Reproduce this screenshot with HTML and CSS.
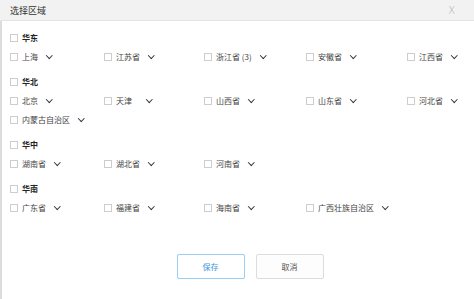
FILE: index.html
```html
<!DOCTYPE html>
<html lang="zh-CN">
<head>
    <meta charset="UTF-8">
    <meta name="viewport" content="width=device-width, initial-scale=1.0">
    <title>选择区域</title>
    <link rel="stylesheet" href="styles.css">
</head>
<body>
    <div class="dialog">
        <div class="dialog-head">
            <span class="dialog-title">选择区域</span>
            <span class="dialog-close">X</span>
        </div>
        <div class="dialog-body">
            <div class="region">
                <div class="region-title"><span class="check"></span>华东</div>
                <div class="region-list">
                    <div class="item"><span class="check"></span>上海<i class="arrow"></i></div>
                    <div class="item"><span class="check"></span>江苏省<i class="arrow"></i></div>
                    <div class="item"><span class="check"></span>浙江省 (3)<i class="arrow"></i></div>
                    <div class="item"><span class="check"></span>安徽省<i class="arrow"></i></div>
                    <div class="item"><span class="check"></span>江西省<i class="arrow"></i></div>
                </div>
            </div>
            <div class="region">
                <div class="region-title"><span class="check"></span>华北</div>
                <div class="region-list">
                    <div class="item"><span class="check"></span>北京<i class="arrow"></i></div>
                    <div class="item"><span class="check"></span>天津<i class="arrow wide"></i></div>
                    <div class="item"><span class="check"></span>山西省<i class="arrow"></i></div>
                    <div class="item"><span class="check"></span>山东省<i class="arrow"></i></div>
                    <div class="item"><span class="check"></span>河北省<i class="arrow"></i></div>
                    <div class="item"><span class="check"></span>内蒙古自治区<i class="arrow"></i></div>
                </div>
            </div>
            <div class="region">
                <div class="region-title"><span class="check"></span>华中</div>
                <div class="region-list">
                    <div class="item"><span class="check"></span>湖南省<i class="arrow"></i></div>
                    <div class="item"><span class="check"></span>湖北省<i class="arrow"></i></div>
                    <div class="item"><span class="check"></span>河南省<i class="arrow"></i></div>
                </div>
            </div>
            <div class="region">
                <div class="region-title"><span class="check"></span>华南</div>
                <div class="region-list">
                    <div class="item"><span class="check"></span>广东省<i class="arrow"></i></div>
                    <div class="item"><span class="check"></span>福建省<i class="arrow"></i></div>
                    <div class="item"><span class="check"></span>海南省<i class="arrow"></i></div>
                    <div class="item"><span class="check"></span>广西壮族自治区<i class="arrow"></i></div>
                </div>
            </div>
            <div class="actions">
                <button class="btn btn-save">保存</button>
                <button class="btn btn-cancel">取消</button>
            </div>
        </div>
    </div>
</body>
</html>
```

FILE: styles.css
```css
body {
    margin: 0;
    font-family: "Noto Sans CJK SC", "Noto Sans", sans-serif;
    background-color: #fff;
    color: #333;
}
.dialog {
    height: 299px;
    display: flex;
    flex-direction: column;
}
.dialog-head {
    height: 20px;
    background: #f2f2f2;
    border-bottom: 1px solid #e4e4e4;
    display: flex;
    justify-content: space-between;
    align-items: center;
    padding: 0 19px 0 10px;
    font-size: 9px;
    color: #333;
}
.dialog-close {
    font-family: "DejaVu Sans", sans-serif;
    font-size: 10px;
    font-weight: 300;
    color: #b0b0b0;
}
.dialog-body {
    flex: 1;
    border-left: 2px solid #dcdcdc;
    padding: 7px 0 0 8px;
}
.region {
    margin-bottom: 6px;
}
.region-title, .item {
    height: 19px;
    display: flex;
    align-items: center;
    font-size: 8px;
    white-space: nowrap;
}
.region-title {
    font-weight: bold;
    color: #222;
}
.region-list {
    display: grid;
    grid-template-columns: 94px 100px 102px 101px auto;
}
.item {
    color: #444;
}
.check {
    width: 6px;
    height: 6px;
    border: 1px solid #cdcdcd;
    background: #fff;
    margin-right: 4px;
    flex: none;
}
.arrow {
    width: 3.5px;
    height: 3.5px;
    border-right: 1.5px solid #333;
    border-bottom: 1.5px solid #333;
    transform: rotate(45deg);
    margin: -3px 0 0 9px;
}
.arrow.wide {
    margin-left: 15px;
}
.actions {
    display: flex;
    justify-content: center;
    gap: 11px;
    padding-left: 16px;
    margin-top: 37px;
}
.btn {
    width: 68px;
    height: 25px;
    background: #fff;
    border-radius: 2px;
    font-family: inherit;
    font-size: 8px;
    cursor: pointer;
}
.btn-save {
    border: 1px solid #9ccff3;
    color: #3b96db;
    box-shadow: 0 0 1px #cfe8fa;
}
.btn-cancel {
    border: 1px solid #dcdcdc;
    color: #555;
    background: #fdfdfd;
}
```
